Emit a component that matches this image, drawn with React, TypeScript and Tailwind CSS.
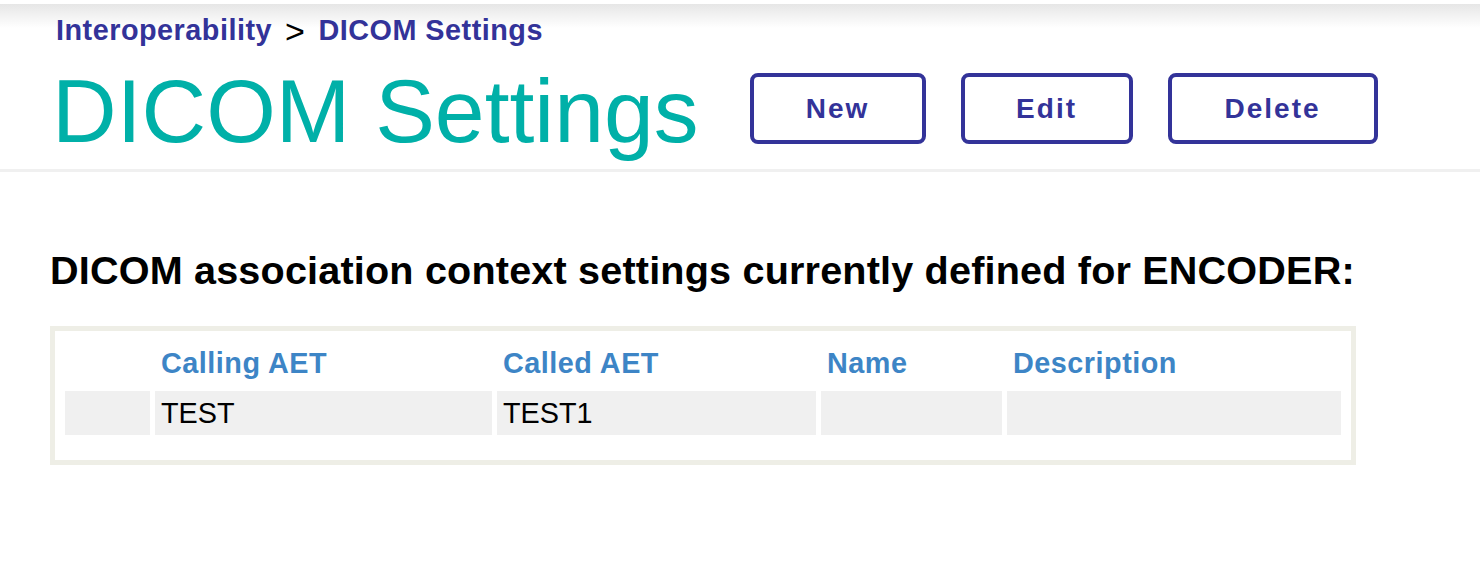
const columns = ["", "Calling AET", "Called AET", "Name", "Description"];
const rows = [["", "TEST", "TEST1", "", ""]];

const ActionButton: React.FC<{ label: string; width: string }> = ({ label, width }) => (
  <button
    className={`${width} h-[71px] rounded-[8px] border-[4px] border-[#333399] bg-white text-[28px] font-bold tracking-[2px] text-[#333399]`}
  >
    {label}
  </button>
);

export default function App() {
  return (
    <div className="min-h-[575px] bg-white font-['Liberation_Sans',Arial,sans-serif]">
      <header className="bg-[linear-gradient(to_bottom,#ffffff_0px,#ffffff_4px,#e6e6e6_4px,#ffffff_28px)] pt-[14px]">
        <div className="flex items-center pl-[56px] text-[28.8px] leading-[33px] tracking-[0.5px]">
          <a className="font-bold text-[#333399]">Interoperability</a>
          <span className="px-[13px] text-[34px] leading-[30px] text-black">&gt;</span>
          <a className="font-bold text-[#333399]">DICOM Settings</a>
        </div>
        <div className="flex items-start pl-[52px] pt-[20px] pb-[13px]">
          <h1 className="text-[89.5px] leading-[89px] text-[#00b0a8]">DICOM Settings</h1>
          <div className="ml-[51px] mt-[6px] flex gap-[35px]">
            <ActionButton label="New" width="w-[176px]" />
            <ActionButton label="Edit" width="w-[172px]" />
            <ActionButton label="Delete" width="w-[210px]" />
          </div>
        </div>
        <div className="h-[3px] bg-[#f0f0f0]" />
      </header>

      <main className="px-[50px] pt-[76px]">
        <h2 className="text-[39.6px] leading-[45px] font-bold tracking-[0.18px] text-black">
          DICOM association context settings currently defined for ENCODER:
        </h2>
        <div className="mt-[33px] w-[1306px] border-[5px] border-[#eeeee6] px-[10px] pt-[10px] pb-[25px]">
          <div className="grid grid-cols-[85px_337px_319px_181px_334px] gap-[5px] text-[28.8px] leading-[33px]">
            {columns.map((c, i) => (
              <div key={i} className="flex h-[45px] items-center px-[6px] font-bold tracking-[0.5px] text-[#3d85c6]">
                {c}
              </div>
            ))}
            {rows.map((r, ri) =>
              r.map((v, ci) => (
                <div key={`${ri}-${ci}`} className="flex h-[44px] items-center bg-[#f0f0f0] px-[6px] text-black">
                  {v}
                </div>
              ))
            )}
          </div>
        </div>
      </main>
    </div>
  );
}
